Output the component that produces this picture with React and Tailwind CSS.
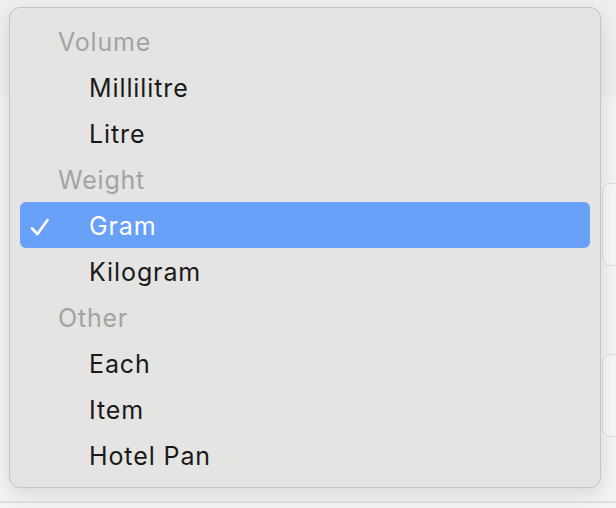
import { Fragment } from 'react';

const groups = [
  { label: 'Volume', items: ['Millilitre', 'Litre'] },
  { label: 'Weight', items: ['Gram', 'Kilogram'] },
  { label: 'Other', items: ['Each', 'Item', 'Hotel Pan'] },
];

const selected = 'Gram';

const Check = () => (
  <svg width="20" height="18" viewBox="0 0 20 18" fill="none">
    <path d="M2 10.5 L7.5 16 L17.5 2" stroke="white" strokeWidth="2.6" strokeLinecap="round" strokeLinejoin="round" />
  </svg>
);

export default function App() {
  return (
    <div className="relative w-[616px] h-[508px] overflow-hidden bg-[#f4f4f4]" style={{ fontFamily: 'Inter, "Noto Sans", sans-serif' }}>
      {/* page behind the menu */}
      <div className="h-[97px] bg-[#efefef]" />
      <div className="flex flex-col items-end pt-[86px]">
        <div className="w-[20px] h-[83px] mr-[-6px] rounded-[8px] border border-[#dedede] bg-[#f7f7f7]" />
        <div className="w-[20px] h-[83px] mr-[-6px] mt-[88px] rounded-[8px] border border-[#dedede] bg-[#f7f7f7]" />
      </div>
      <div className="absolute left-0 right-0 top-[501px] h-[2px] bg-[#e0e0e0]" />

      {/* popup menu */}
      <div className="absolute left-[9px] top-[7px] w-[592px] h-[481px] rounded-[11px] border border-[#c4c4c4] bg-[#e4e4e3] px-[10px] pt-[10px] shadow-[0_6px_20px_rgba(0,0,0,0.12)]">
        {groups.map((g) => (
          <Fragment key={g.label}>
            <div className="h-[46px] flex items-center pt-[4px] pl-[38px] text-[25px] text-[#a3a3a3] tracking-[0.8px]">{g.label}</div>
            {g.items.map((it) => {
              const on = it === selected;
              return (
                <div
                  key={it}
                  className={`h-[46px] flex items-center pt-[3px] rounded-[6px] text-[25px] tracking-[0.9px] ${on ? 'bg-[#69a0f8] text-white' : 'text-[#1a1a1a]'}`}
                >
                  <span className="w-[69px] pl-[10px] flex items-center">{on && <Check />}</span>
                  {it}
                </div>
              );
            })}
          </Fragment>
        ))}
      </div>
    </div>
  );
}
